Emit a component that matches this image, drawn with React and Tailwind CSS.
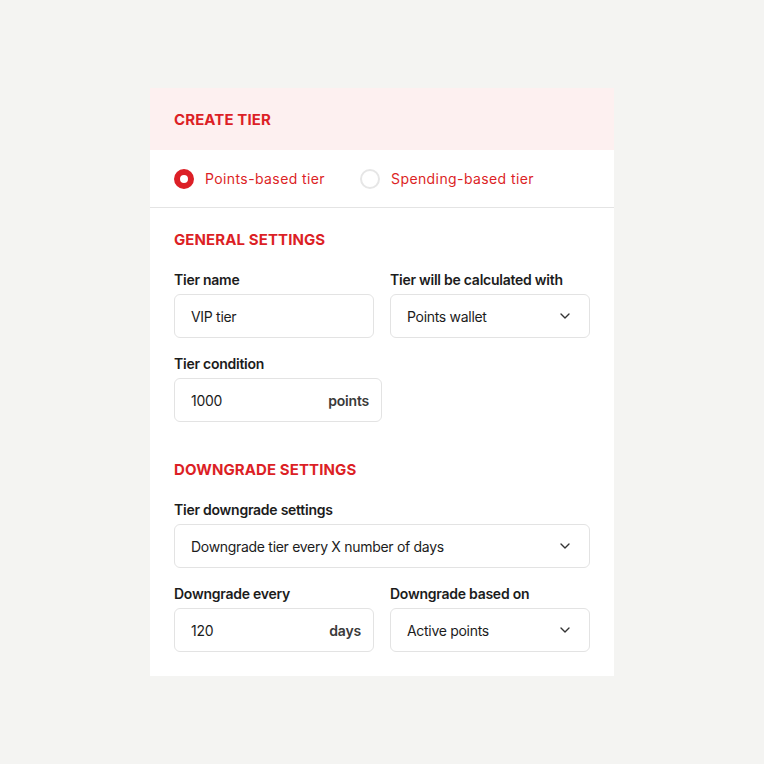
import React, { useState } from 'react';
import { ChevronDown } from 'lucide-react';

const Label = ({ children }) => (
  <div className="text-[14px] leading-5 font-semibold tracking-[-0.25px] text-[#1c1c1c] mb-1">{children}</div>
);

const TextBox = ({ value, suffix, className = '' }) => (
  <div className={`h-11 flex items-center justify-between px-4 border border-[#e3e3e3] rounded-md bg-white ${className}`}>
    <span className="text-[14px] tracking-[-0.3px] text-[#1c1c1c]">{value}</span>
    {suffix && <span className="text-[14px] font-semibold tracking-[-0.2px] text-[#3a3a3a]">{suffix}</span>}
  </div>
);

const SelectBox = ({ value }) => (
  <div className="h-11 flex items-center justify-between pl-4 pr-4 border border-[#e3e3e3] rounded-md bg-white">
    <span className="text-[14px] tracking-[-0.3px] text-[#1c1c1c]">{value}</span>
    <ChevronDown className="w-4 h-4 text-[#333]" strokeWidth={2} />
  </div>
);

const Radio = ({ checked, label, onClick }) => (
  <button type="button" onClick={onClick} className="flex items-center gap-[11px]">
    {checked ? (
      <span className="w-5 h-5 rounded-full border-[6px] border-[#dc1f26] bg-white" />
    ) : (
      <span className="w-5 h-5 rounded-full border-2 border-[#e6e6e6]" />
    )}
    <span className="text-[14px] tracking-[0.4px] text-[#dc1f26]">{label}</span>
  </button>
);

const SectionTitle = ({ children }) => (
  <h2 className="text-[15px] leading-4 font-bold text-[#dc1f26] tracking-[0.1px]">{children}</h2>
);

const App = () => {
  const [tierType, setTierType] = useState('points');

  return (
    <div className="min-h-screen bg-[#f4f4f2] flex justify-center pt-[88px]" style={{ fontFamily: 'Inter, "Noto Sans", sans-serif' }}>
      <div className="w-[464px] h-[588px] bg-white">
        {/* Header */}
        <div className="h-[62px] bg-[#fdf0f0] flex items-center px-6 pt-[2px]">
          <SectionTitle>CREATE TIER</SectionTitle>
        </div>

        {/* Tier type */}
        <div className="h-[58px] flex items-center gap-[35px] px-6 border-b border-[#e4e4e4]">
          <Radio checked={tierType === 'points'} label="Points-based tier" onClick={() => setTierType('points')} />
          <Radio checked={tierType === 'spending'} label="Spending-based tier" onClick={() => setTierType('spending')} />
        </div>

        <div className="px-6 pt-6">
          <SectionTitle>GENERAL SETTINGS</SectionTitle>

          <div className="grid grid-cols-2 gap-4 mt-[22px]">
            <div>
              <Label>Tier name</Label>
              <TextBox value="VIP tier" />
            </div>
            <div>
              <Label>Tier will be calculated with</Label>
              <SelectBox value="Points wallet" />
            </div>
          </div>

          <div className="mt-4">
            <Label>Tier condition</Label>
            <TextBox value="1000" suffix="points" className="w-[208px] pr-3" />
          </div>

          <div className="mt-10">
            <SectionTitle>DOWNGRADE SETTINGS</SectionTitle>
          </div>

          <div className="mt-[22px]">
            <Label>Tier downgrade settings</Label>
            <SelectBox value="Downgrade tier every X number of days" />
          </div>

          <div className="grid grid-cols-2 gap-4 mt-4">
            <div>
              <Label>Downgrade every</Label>
              <TextBox value="120" suffix="days" className="pr-3" />
            </div>
            <div>
              <Label>Downgrade based on</Label>
              <SelectBox value="Active points" />
            </div>
          </div>
        </div>
      </div>
    </div>
  );
};

export default App;
